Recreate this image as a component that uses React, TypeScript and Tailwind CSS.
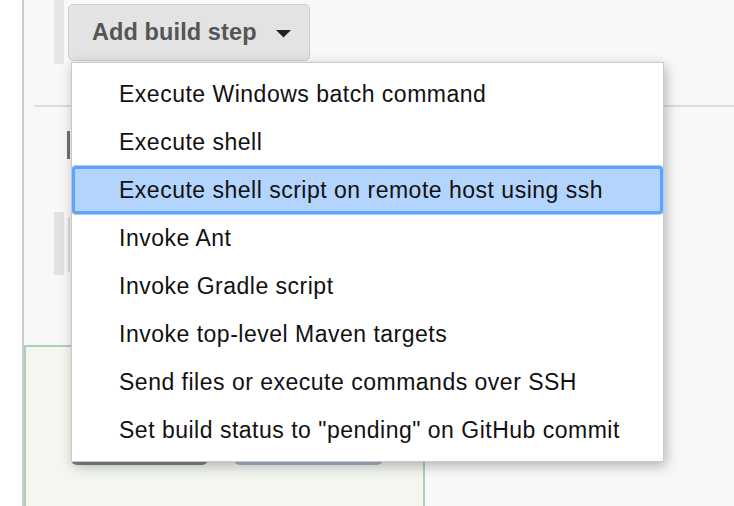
import React from 'react';

const steps = [
  'Execute Windows batch command',
  'Execute shell',
  'Execute shell script on remote host using ssh',
  'Invoke Ant',
  'Invoke Gradle script',
  'Invoke top-level Maven targets',
  'Send files or execute commands over SSH',
  'Set build status to "pending" on GitHub commit',
];

const App: React.FC = () => {
  const selected = 2;

  return (
    <div className="relative w-[734px] h-[506px] overflow-hidden bg-white flex font-['Liberation_Sans',Arial,sans-serif]">
      {/* left gutter */}
      <div className="w-[22px] bg-white" />

      {/* builder panel */}
      <div className="flex-1 flex flex-col border-l-2 border-[#cacaca] bg-[#f8f8f8]">
        {/* Add build step row */}
        <div className="flex h-[64px] pl-[30px]">
          <div className="w-[10px] h-[64px] bg-[#e6e6e6]" />
          <button className="ml-[4px] mt-[4px] h-[57px] w-[242px] rounded-[5px] border border-[#cfcfcf] bg-[#e3e3e3] flex items-center pl-[23px] text-[23.5px] font-bold text-[#555] tracking-[0.1px]">
            Add build step
            <svg width="15" height="8" viewBox="0 0 15 8" className="ml-[19px] mt-[2px]">
              <path d="M0 0h15L7.5 7.5z" fill="#222" />
            </svg>
          </button>
        </div>

        <div className="mt-[41px] ml-[10px] border-t-2 border-[#dcdcdc]" />

        {/* rows hidden behind the menu */}
        <div className="ml-[43px] mt-[24px] w-[3px] h-[28px] bg-[#6f6f6f]" />
        <div className="flex mt-[53px] ml-[30px] h-[63px]">
          <div className="w-[10px] bg-[#e2e2e2]" />
          <div className="ml-[4px] mt-[5px] w-[2px] h-[55px] bg-[#dadada]" />
        </div>

        {/* post-build section */}
        <div className="mt-[70px] flex-1 w-[401px] border-t-2 border-l-2 border-r-2 border-[#aacfc0] bg-[#f4f6f0] flex items-start gap-[26px] pl-[45px]">
          <div className="mt-[80px] w-[137px] h-[38px] rounded-b-[6px] bg-[#7b8791]" />
          <div className="mt-[80px] w-[149px] h-[38px] rounded-b-[6px] bg-[#aab8cb]" />
        </div>
      </div>

      {/* dropdown menu */}
      <div className="absolute left-[71px] top-[62px] w-[593px] h-[400px] border border-[#c9c9c9] bg-white shadow-[2px_4px_12px_rgba(0,0,0,0.28)] py-[7px] flex flex-col">
        {steps.map((s, i) => (
          <div
            key={s}
            className={
              i === selected
                ? 'h-[48px] flex items-center pl-[44px] rounded-[4px] border-[3px] border-[#5ea5f9] bg-[#b3d4fc] shadow-[0_0_0_1px_#a8cbfa] text-[23px] tracking-[0.5px] text-[#111]'
                : 'h-[48px] flex items-center pl-[47px] text-[23px] tracking-[0.5px] text-[#111]'
            }
          >
            {s}
          </div>
        ))}
      </div>
    </div>
  );
};

export default App;
